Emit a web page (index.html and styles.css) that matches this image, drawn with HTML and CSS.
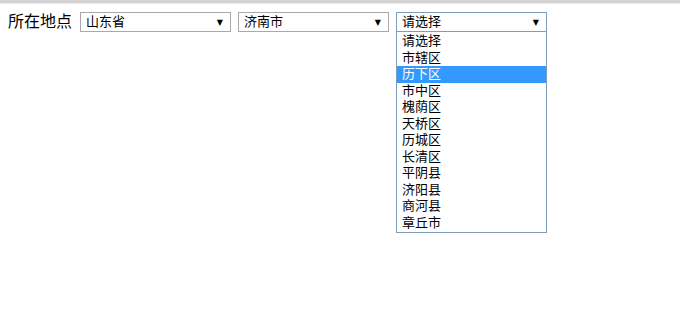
FILE: index.html
```html
<!DOCTYPE html>
<html lang="zh-CN">

<head>
    <meta charset="UTF-8">
    <title>所在地点</title>
    <link rel="stylesheet" href="styles.css">
</head>

<body>
    <div class="top-bar"></div>
    <div class="location">
        <span class="label">所在地点</span>
        <div class="select">
            <span>山东省</span>
            <i class="arrow">▼</i>
        </div>
        <div class="select">
            <span>济南市</span>
            <i class="arrow">▼</i>
        </div>
        <div class="dropdown">
            <div class="select select-open">
                <span>请选择</span>
                <i class="arrow">▼</i>
            </div>
            <div class="options">
                <div class="option">请选择</div>
                <div class="option">市辖区</div>
                <div class="option active">历下区</div>
                <div class="option">市中区</div>
                <div class="option">槐荫区</div>
                <div class="option">天桥区</div>
                <div class="option">历城区</div>
                <div class="option">长清区</div>
                <div class="option">平阴县</div>
                <div class="option">济阳县</div>
                <div class="option">商河县</div>
                <div class="option">章丘市</div>
            </div>
        </div>
    </div>
</body>

</html>
```

FILE: styles.css
```css
body {
    margin: 0;
    padding: 0;
    font-family: "Liberation Sans", "Noto Sans CJK SC", sans-serif;
    color: #000;
    background: #fff;
}

.top-bar {
    height: 3px;
    background: #d2d2d2;
    border-bottom: 1px solid #ececec;
}

.location {
    display: flex;
    align-items: flex-start;
    padding: 8px 0 0 8px;
}

.label {
    font-size: 16px;
    line-height: 20px;
    margin-right: 8px;
}

.select {
    box-sizing: border-box;
    width: 151px;
    height: 20px;
    margin-right: 7px;
    padding: 0 5px;
    border: 1px solid #a9a9a9;
    display: flex;
    align-items: center;
    justify-content: space-between;
    font-size: 13px;
}

.select span {
    line-height: 18px;
}

.arrow {
    font-style: normal;
    font-size: 8px;
    font-family: "DejaVu Sans", sans-serif;
    margin-right: 2px;
}

.dropdown {
    width: 151px;
}

.select-open {
    margin-right: 0;
    border-color: #7f9db9;
}

.options {
    box-sizing: border-box;
    width: 151px;
    margin-top: -1px;
    padding: 1px 0;
    border: 1px solid #7f9db9;
    background: #fff;
    font-size: 13px;
}

.option {
    height: 16.5px;
    line-height: 16.5px;
    padding-left: 5px;
}

.option.active {
    background: #3399ff;
    color: #fff;
}
```
